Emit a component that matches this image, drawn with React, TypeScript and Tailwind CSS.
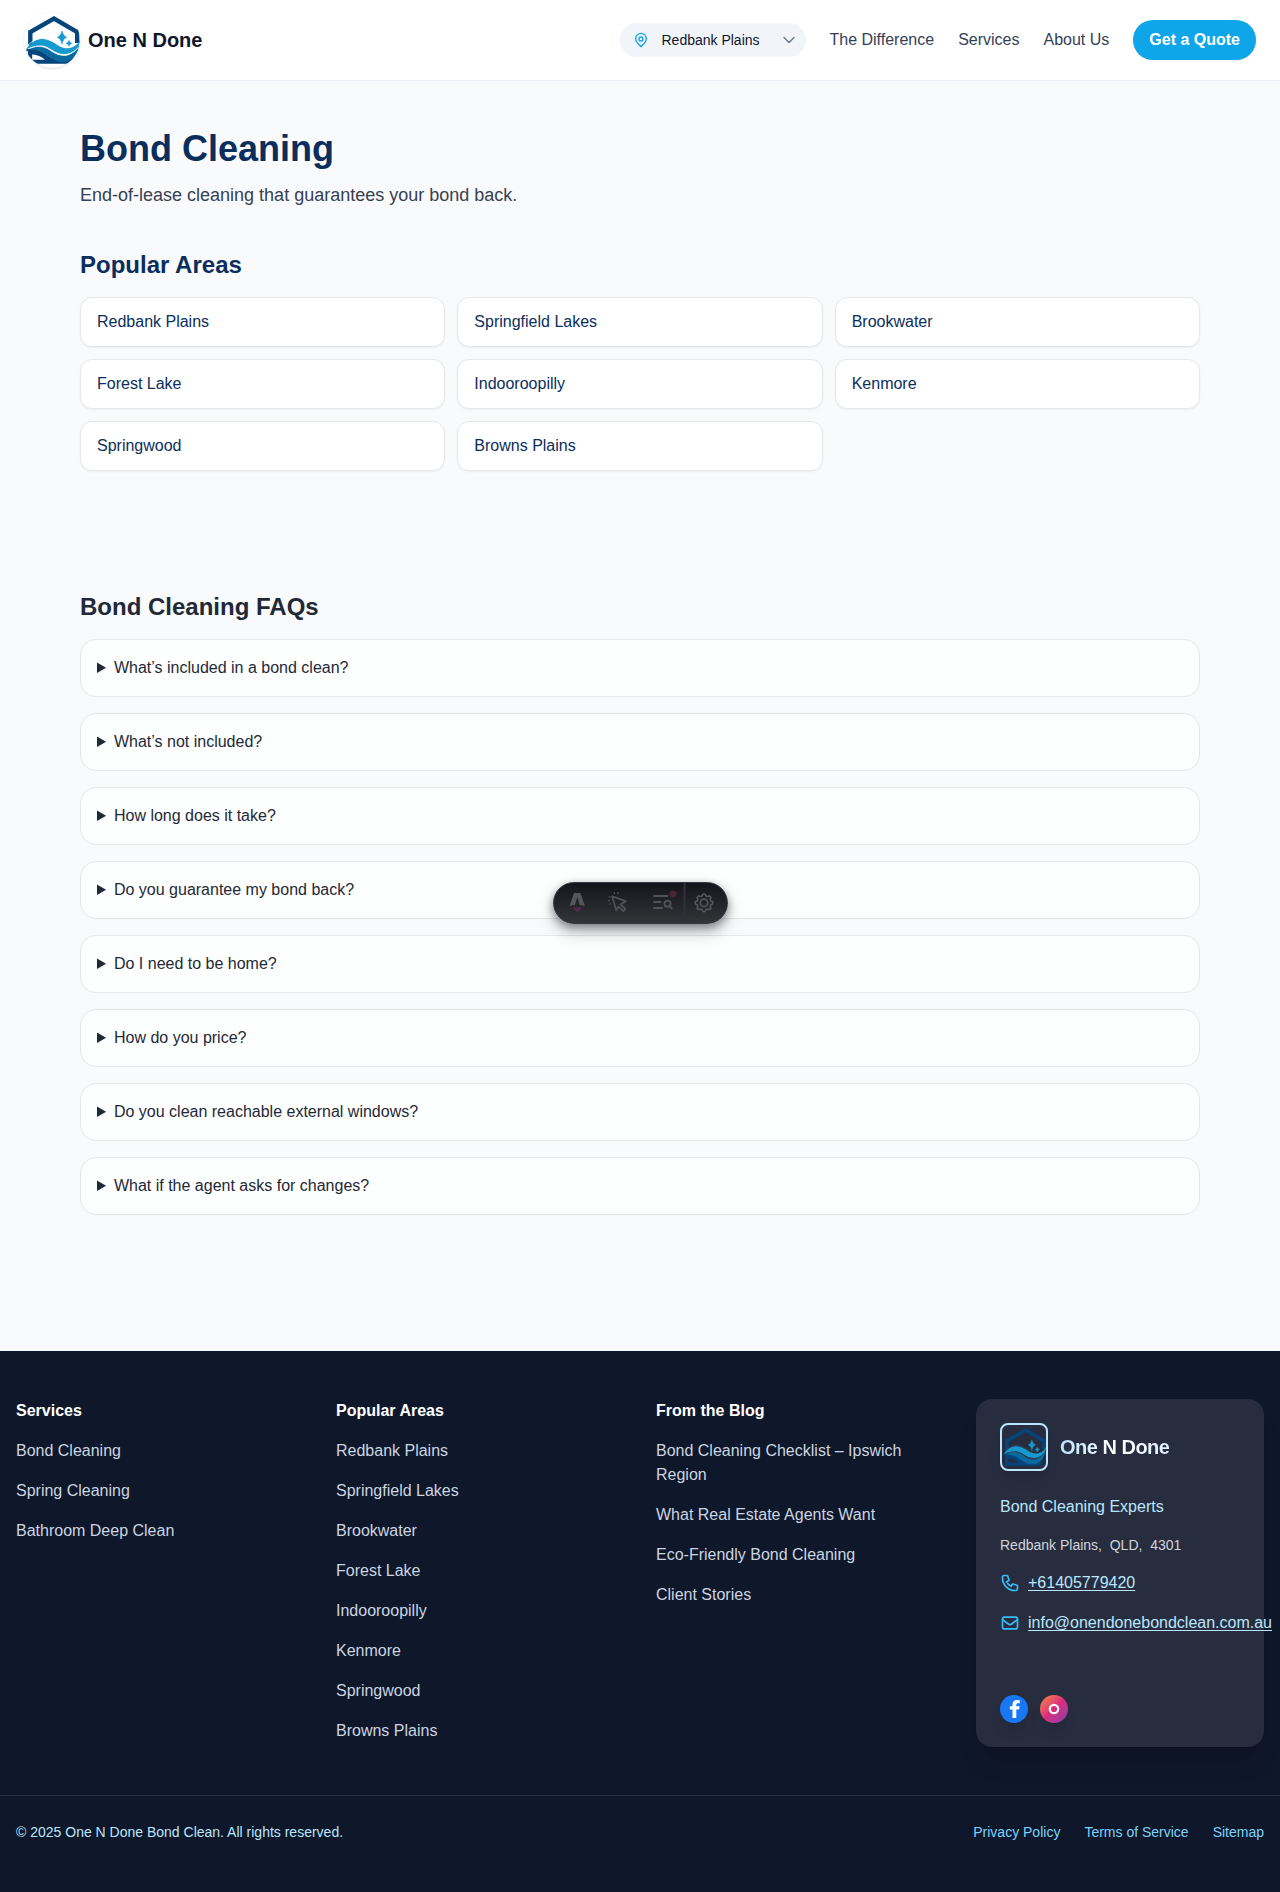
import React from "react";

const areas = ["Redbank Plains", "Springfield Lakes", "Brookwater", "Forest Lake", "Indooroopilly", "Kenmore", "Springwood", "Browns Plains"];
const faqs = [
  "What’s included in a bond clean?",
  "What’s not included?",
  "How long does it take?",
  "Do you guarantee my bond back?",
  "Do I need to be home?",
  "How do you price?",
  "Do you clean reachable external windows?",
  "What if the agent asks for changes?",
];

// Eight-lobed gear outline centred on the origin.
const gearPath =
  Array.from({ length: 96 }, (_, i) => {
    const a = (i / 96) * Math.PI * 2;
    const r = 7.9 + 0.9 * Math.tanh(2 * Math.cos(8 * a));
    return `${i ? "L" : "M"}${(r * Math.cos(a)).toFixed(2)} ${(r * Math.sin(a)).toFixed(2)}`;
  }).join("") + "Z";

function Logo({ className, gap }: { className: string; gap: string }) {
  return (
    <svg viewBox="0 0 56 56" className={className} fill="none">
      <path d="M6.300 33V20L30 6.500 53.200 20v11" stroke="#05457c" strokeWidth="4.400" />
      <path d="M4 38h4.200v9.800H21c-3-3-8-5-13-5.500l-6-4 1-1.500c9-1 15 2 21 7 5 4 12 5 20 4l8-3-3 7H4z" fill="#05457c" />
      <path d="M5 37.500c10-6 17-3 24 2.500 8 6 20 6 26.500-8-1 11-8 18-17.500 18C27 50 21 37 5 37.500z" fill="#0a6a9f" />
      <path d="M2 37.500C7.500 29 13.500 27 18.500 27 25 27 30 31 36 34.500s16 2 20-6.500c0 8-7.500 14-15.500 14-11 0-15-8.500-24-8.500-5 0-9 1.500-14.500 4z" fill="#1599cf" />
      <path d="M4 37c11-5 18-2 24 2.500 8 5.500 20 4.500 26.500-4" stroke={gap} strokeWidth=".8" />
      <path d="M3.500 33.500C11 26 19 24.500 26 28s14 6 19 5" stroke={gap} strokeWidth=".8" />
      <path d="M38 19q1 5 4.600 6.300Q39 26.600 38 31.800 37 26.600 33.400 25.300 37 24 38 19z" fill="#1599cf" stroke="#1599cf" strokeWidth=".6" />
      <path d="M45 28.300q.700 2.300 3 3-2.300.700-3 3-.700-2.300-3-3 2.300-.700 3-3z" fill="#1599cf" stroke="#1599cf" strokeWidth=".4" />
    </svg>
  );
}

function Toolbar() {
  return (
    <div className="fixed left-[552.500px] top-[882px] flex h-[42px] w-[175px] items-center overflow-visible rounded-full border border-[#343841] bg-linear-to-b from-[#13151a] to-[#343539] shadow-[0_3px_8px_rgba(19,21,26,0.4),0_8px_16px_rgba(19,21,26,0.26)]">
      <svg viewBox="0 0 174 40" className="h-10 w-[174px] shrink-0" fill="none">
        <path d="M15.500 23.300 20 10h6.500L31 23.300q-3-1.300-5.300-1.300l-2.400-8-2.400 8q-2.400 0-5.400 1.300z" fill="#54565b" />
        <path d="M19.300 24q3.800 1.500 8 0 0 2.500-2 3.600-1.200 1-1.700 2.400-.5-1.500-1.900-2.400-2-1-2.400-3.600z" fill="#552a50" />
        <g stroke="#505257" strokeWidth="1.800" strokeLinejoin="round" strokeLinecap="round">
          <path d="m58.200 13.300 13.500 4.900-5.200 3.200 5 4.600-2.200 2.200-4.800-4.600-2.300 3.600z" />
          <path d="m60.500 10.600-.200-.600M63.800 10.600l.300-.800M56 14l-.700-.400M55.500 17.500h-.800M56.400 20.800l-.500.300" strokeWidth="1.400" />
        </g>
        <g stroke="#505257" strokeWidth="1.900" strokeLinecap="round">
          <path d="M100 13h13.500M100 19h6.500M100 25h8" />
          <circle cx="113.600" cy="20.800" r="3" />
          <path d="m115.800 23.200 2 2.300" />
        </g>
        <circle cx="119" cy="11" r="3.500" fill="#4b2632" />
        <path d="M130.500 0v40" stroke="#303237" strokeWidth="2" />
        <g transform="translate(150 19.800)" stroke="#54565b" strokeWidth="1.700" strokeLinejoin="round">
          <path d={gearPath} />
          <circle r="3.700" />
        </g>
      </svg>
    </div>
  );
}

function LinkColumn({ title, items }: { title: string; items: string[] }) {
  return (
    <div>
      <h3 className="mb-4 font-semibold text-white">{title}</h3>
      <ul className="space-y-4 text-[#cbd5e1]">
        {items.map((t) => (
          <li key={t}><a href="#">{t}</a></li>
        ))}
      </ul>
    </div>
  );
}

export default function App() {
  return (
    <div className="flex min-h-[1892px] flex-col bg-[#f9fafc] font-['Liberation_Sans',Arial,sans-serif] text-base text-[#1f2937]">
      <header className="flex h-[81px] items-center justify-between border-b border-[#edf1f7] bg-white px-6">
        <a href="#" className="flex items-center gap-2">
          <span className="size-14 overflow-hidden rounded-full shadow-[0_1px_3px_rgba(0,0,0,0.12)]"><Logo className="size-14" gap="#e6f4fb" /></span>
          <span className="text-xl font-bold text-[#0f172a]">One N Done</span>
        </a>
        <nav className="flex items-center gap-6 text-[#334155]">
          <div className="-mr-px flex h-[34px] w-[186px] items-center rounded-full bg-slate-100 pl-[13px] pr-[9px] text-sm text-[#0f172a]">
            <svg viewBox="0 0 24 24" className="size-4 text-[#0ea5e9]" fill="none" stroke="currentColor" strokeWidth="2">
              <path d="M12 22c-3-3-8-7-8-12a8 8 0 0 1 16 0c0 5-5 9-8 12z" />
              <circle cx="12" cy="10.500" r="3" />
            </svg>
            <span className="ml-3 flex-1">Redbank Plains</span>
            <svg viewBox="0 0 16 16" className="size-4 text-[#64748b]" fill="none" stroke="currentColor" strokeWidth="1.300" strokeLinecap="round" strokeLinejoin="round">
              <path d="m3 5.500 5 5 5-5" />
            </svg>
          </div>
          <a href="#">The Difference</a>
          <a href="#">Services</a>
          <a href="#">About Us</a>
          <a href="#" className="rounded-full bg-[#0ea5e9] px-4 py-2 font-semibold text-white shadow-xs">Get a Quote</a>
        </nav>
      </header>

      <main className="mx-auto w-[1120px] flex-1 pt-12">
        <h1 className="text-4xl font-bold text-[#0b2e5c]">Bond Cleaning</h1>
        <p className="mt-3 text-lg leading-7 text-[#374151]">End-of-lease cleaning that guarantees your bond back.</p>
        <h2 className="mt-10 text-2xl font-semibold text-[#0b2e5c]">Popular Areas</h2>
        <div className="mt-4 grid grid-cols-3 gap-3">
          {areas.map((a) => (
            <a key={a} href="#" className="rounded-xl border border-gray-200 bg-white px-4 py-3 text-[#0b2e5c] shadow-xs">{a}</a>
          ))}
        </div>
        <h2 className="mt-30 text-2xl font-semibold text-[#1f2937]">Bond Cleaning FAQs</h2>
        <div className="mt-4 space-y-4">
          {faqs.map((q) => (
            <details key={q} className="rounded-2xl border border-gray-200 bg-[#fdfefe] p-4">
              <summary>{q}</summary>
            </details>
          ))}
        </div>
      </main>

      <footer className="h-[541px] bg-[#0f172a]">
        <div className="grid grid-cols-4 gap-8 px-4 py-12">
          <LinkColumn title="Services" items={["Bond Cleaning", "Spring Cleaning", "Bathroom Deep Clean"]} />
          <LinkColumn title="Popular Areas" items={areas} />
          <LinkColumn title="From the Blog" items={["Bond Cleaning Checklist – Ipswich Region", "What Real Estate Agents Want", "Eco-Friendly Bond Cleaning", "Client Stories"]} />
          <div className="h-[348px] min-w-0 rounded-2xl bg-[#272d3f] p-6 shadow-xl">
            <div className="flex items-center gap-3">
              <span className="size-12 overflow-hidden rounded-lg border-2 border-[#bae6fd] shadow-lg"><Logo className="size-11" gap="#2b5570" /></span>
              <span className="bg-linear-to-r from-[#bae6fd] via-white to-[#e0f2fe] bg-clip-text text-xl font-bold tracking-tight text-transparent">One N Done</span>
            </div>
            <p className="mt-6 text-[#bae6fd]">Bond Cleaning Experts</p>
            <p className="mt-4 text-sm whitespace-pre text-gray-300">Redbank Plains,  QLD,  4301</p>
            <div className="mt-4 flex items-center gap-2 text-[#bae6fd]">
              <svg viewBox="0 0 24 24" className="size-5 shrink-0 text-[#38bdf8]" fill="none" stroke="currentColor" strokeWidth="2" strokeLinecap="round" strokeLinejoin="round">
                <path d="M3 5a2 2 0 0 1 2-2h3.280a1 1 0 0 1 .948.684l1.498 4.493a1 1 0 0 1-.502 1.210l-2.257 1.130a11.042 11.042 0 0 0 5.516 5.516l1.130-2.257a1 1 0 0 1 1.210-.502l4.493 1.498a1 1 0 0 1 .684.949V19a2 2 0 0 1-2 2h-1C9.716 21 3 14.284 3 6V5z" />
              </svg>
              <a href="#" className="underline underline-offset-2">+61405779420</a>
            </div>
            <div className="mt-4 flex items-center gap-2 text-[#bae6fd]">
              <svg viewBox="0 0 24 24" className="size-5 shrink-0 text-[#38bdf8]" fill="none" stroke="currentColor" strokeWidth="2" strokeLinecap="round" strokeLinejoin="round">
                <rect x="3" y="5" width="18" height="14" rx="2" />
                <path d="m3 8 7.500 5.500a2.500 2.500 0 0 0 3 0L21 8" />
              </svg>
              <a href="#" className="underline underline-offset-2">info@onendonebondclean.com.au</a>
            </div>
            <div className="mt-[60px] flex gap-3">
              <a href="#" className="flex size-7 items-center justify-center rounded-full bg-[#1877f2] shadow-lg">
                <svg viewBox="0 0 28 28" className="size-7" fill="white">
                  <path d="M12.500 23v-8.500H9.800v-3.300h2.700V9.500c0-3 1.700-4.500 4.500-4.500l2.800.2v3h-1.600c-1.400 0-1.900.7-1.900 1.700v1.300h3.300l-.5 3.300h-2.800V23z" />
                </svg>
              </a>
              <a href="#" className="flex size-7 items-center justify-center rounded-full bg-linear-to-br from-[#f58529] via-[#dd2a7b] to-[#8134af] shadow-lg">
                <svg viewBox="0 0 28 28" className="size-7" fill="none">
                  <circle cx="14" cy="14" r="4.200" stroke="white" strokeWidth="2.200" />
                  <circle cx="18.500" cy="9.500" r=".8" fill="#dd3a85" />
                </svg>
              </a>
            </div>
          </div>
        </div>
        <div className="flex items-center justify-between border-t border-[#272e3f] px-4 pt-[26px] text-sm">
          <p className="text-[#bae6fd]">© 2025 One N Done Bond Clean. All rights reserved.</p>
          <div className="flex gap-6 text-[#7dd3fc]">
            <a href="#">Privacy Policy</a>
            <a href="#">Terms of Service</a>
            <a href="#">Sitemap</a>
          </div>
        </div>
      </footer>
      <Toolbar />
    </div>
  );
}
